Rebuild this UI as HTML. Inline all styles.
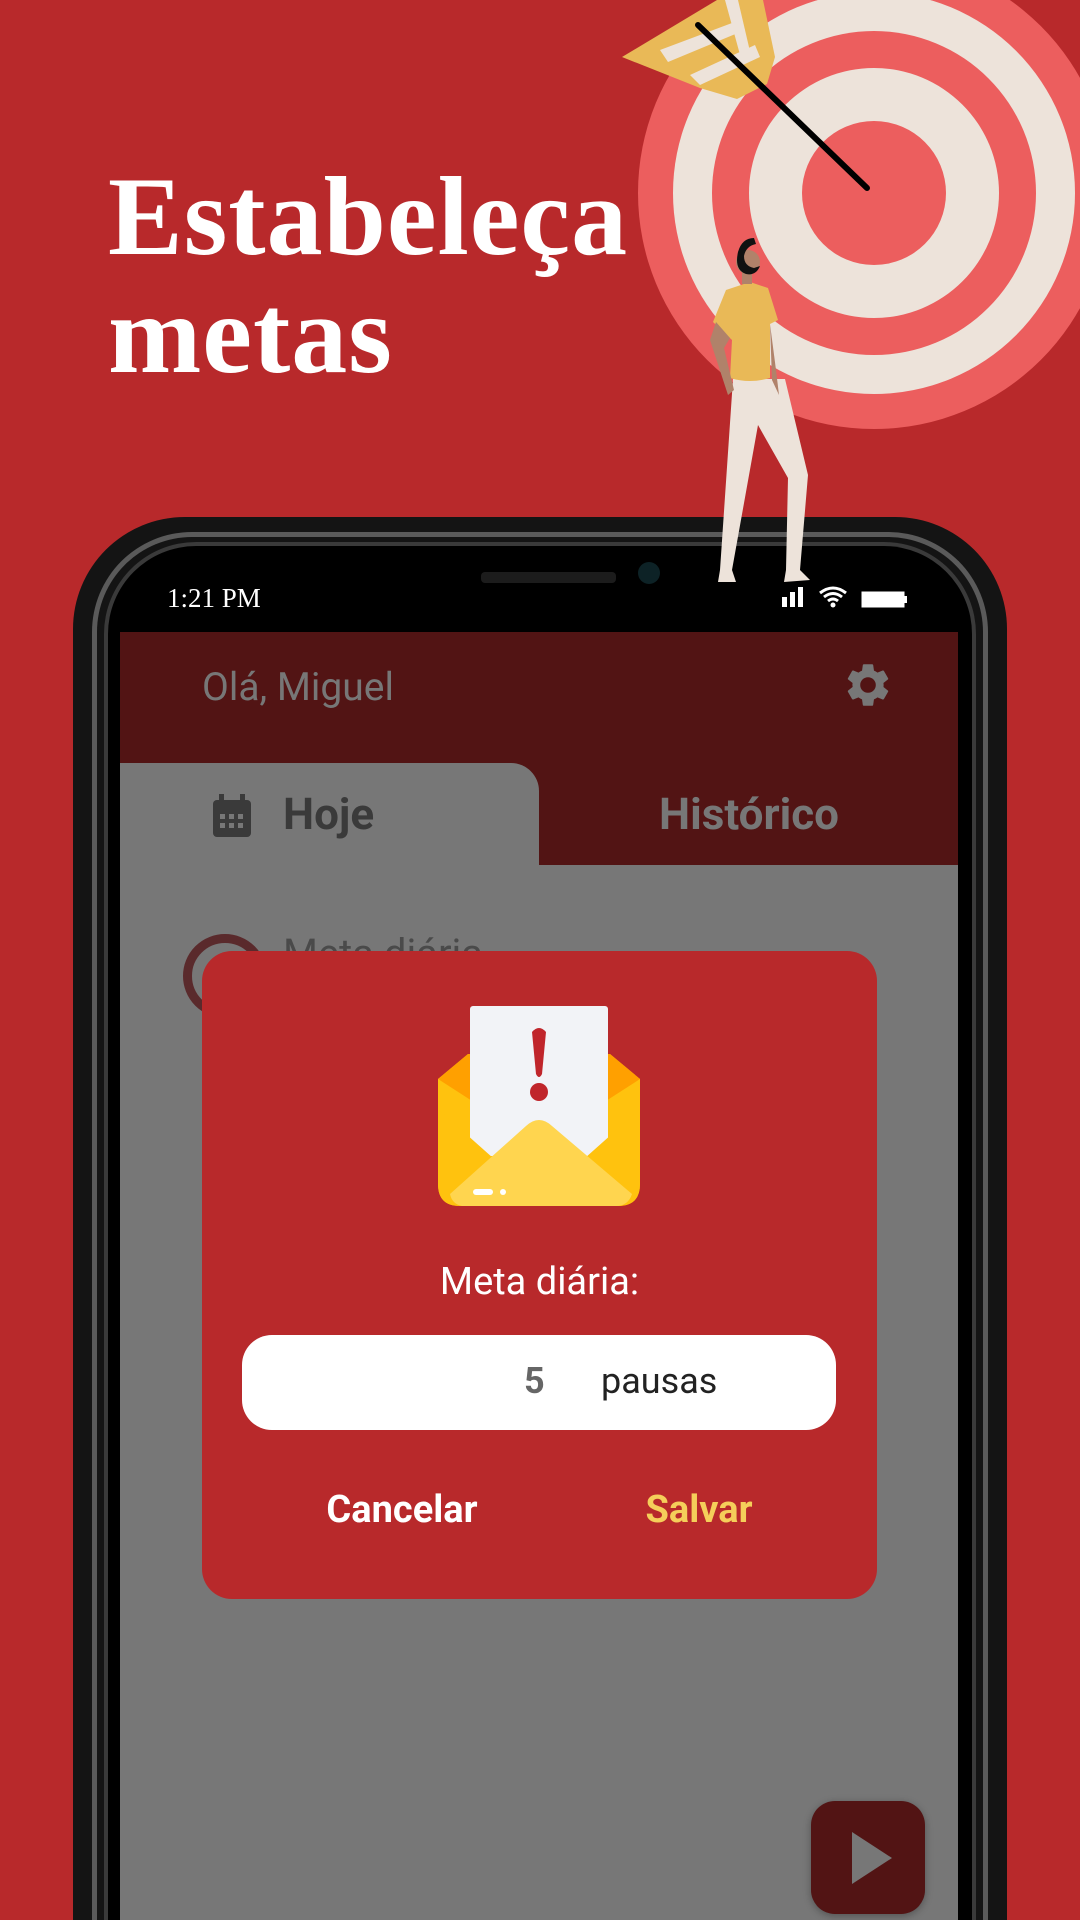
<!DOCTYPE html>
<html><head><meta charset="utf-8"><style>
*{margin:0;padding:0;box-sizing:border-box}
html{width:1080px;height:1920px;overflow:hidden}
body{width:1080px;height:1920px;overflow:hidden;background:#B8292B;position:relative;font-family:"Liberation Sans",sans-serif}
#wrap{position:absolute;left:0;top:0;width:1080px;height:1920px;overflow:hidden}
.abs{position:absolute}
.title{left:108px;top:158px;color:#fff;font-family:"Liberation Serif",serif;font-weight:bold;font-size:112px;line-height:118px;letter-spacing:1px}
.sans{font-family:"Roboto","Liberation Sans",sans-serif}
</style></head><body><div id="wrap">
<svg class="abs" style="left:0;top:0" width="1080" height="620">
<circle cx="874" cy="193" r="236" fill="#EC5E5E"/>
<circle cx="874" cy="193" r="201" fill="#EDE3DA"/>
<circle cx="874" cy="193" r="162" fill="#EC5E5E"/>
<circle cx="874" cy="193" r="125" fill="#EDE3DA"/>
<circle cx="874" cy="193" r="72" fill="#EC5E5E"/>
<polygon points="622,57 717,0 763,0 775,57 767,84 737,99 700,88" fill="#E9B957"/>
<polygon points="660,50 740,20 745,30 668,62" fill="#EDE3DA"/>
<polygon points="690,75 755,45 760,57 700,85" fill="#EDE3DA"/>
<polygon points="725,0 738,0 752,60 742,62" fill="#EDE3DA"/>
<line x1="698" y1="25" x2="867" y2="188" stroke="#000" stroke-width="6" stroke-linecap="round"/>
</svg>
<div class="abs title">Estabeleça<br>metas</div>

<!-- phone -->
<div class="abs" style="left:73px;top:517px;width:934px;height:1403px;background:#141414;border-radius:112px 112px 0 0"></div>
<div class="abs" style="left:92px;top:532px;width:896px;height:1388px;border:5px solid #5a5a5a;border-bottom:none;border-radius:100px 100px 0 0"></div>
<div class="abs" style="left:104px;top:542px;width:872px;height:1378px;background:#000;border-radius:92px 92px 0 0;border:4px solid #3a3a3a;border-bottom:none"></div>
<div class="abs" style="left:481px;top:572px;width:135px;height:11px;background:#1c1c1c;border-radius:4px"></div>
<div class="abs" style="left:638px;top:562px;width:22px;height:22px;background:#0d2226;border-radius:50%"></div>
<div class="abs" style="left:167px;top:583px;color:#fff;font-family:'Liberation Serif',serif;font-size:27px">1:21 PM</div>
<svg class="abs" style="left:780px;top:583px" width="130" height="30">
<rect x="2" y="14" width="5" height="10" fill="#fff"/><rect x="10" y="9" width="5" height="15" fill="#fff"/><rect x="18" y="4" width="5" height="20" fill="#fff"/>
<path d="M40 10 Q53 0 66 10 M44 14 Q53 7 62 14 M48 18 Q53 14 58 18" stroke="#fff" stroke-width="3" fill="none"/><circle cx="53" cy="22" r="2.5" fill="#fff"/>
<rect x="82" y="9" width="42" height="15" fill="#fff" stroke="#fff"/><rect x="124" y="13" width="3" height="7" fill="#fff"/>
</svg>

<!-- screen -->
<div class="abs" style="left:120px;top:632px;width:838px;height:1288px;background:#777"></div>
<div class="abs" style="left:120px;top:632px;width:838px;height:233px;background:#521414"></div>
<div class="abs" style="left:120px;top:763px;width:419px;height:110px;background:#777;border-radius:0 28px 0 0"></div>
<div class="abs sans" style="left:202px;top:664px;color:#777;font-size:39px">Olá, Miguel</div>
<svg class="abs" style="left:842px;top:659px" width="52" height="52" viewBox="0 0 24 24"><path fill="#777" d="M19.14 12.94c.04-.3.06-.61.06-.94 0-.32-.02-.64-.07-.94l2.03-1.58a.49.49 0 00.12-.61l-1.92-3.32a.49.49 0 00-.59-.22l-2.39.96c-.5-.38-1.03-.7-1.62-.94l-.36-2.54a.48.48 0 00-.48-.41h-3.84c-.24 0-.43.17-.47.41l-.36 2.54c-.59.24-1.130.57-1.62.94l-2.39-.96a.48.48 0 00-.59.22L2.74 8.87c-.12.21-.08.47.12.61l2.03 1.58c-.05.3-.09.63-.09.94s.2.64.07.94l-2.03 1.58a.49.49 0 00-.12.61l1.92 3.32c.12.22.37.29.59.22l2.39-.96c.5.38 1.03.7 1.62.94l.36 2.54c.05.24.24.41.48.41h3.84c.24 0 .44-.17.47-.41l.36-2.54c.59-.24 1.13-.56 1.62-.94l2.39.96c.22.08.47 0 .59-.22l1.92-3.32c.12-.22.07-.47-.12-.61l-2.01-1.58zM12 15.6A3.6 3.6 0 1112 8.4a3.6 3.6 0 010 7.2z"/></svg>
<svg class="abs" style="left:211px;top:794px" width="42" height="44" viewBox="0 0 42 44"><rect x="2" y="6" width="38" height="37" rx="4" fill="#3a3a3a"/><rect x="8" y="0" width="5" height="10" fill="#3a3a3a"/><rect x="29" y="0" width="5" height="10" fill="#3a3a3a"/><g fill="#777"><rect x="9" y="20" width="5" height="5"/><rect x="18" y="20" width="5" height="5"/><rect x="27" y="20" width="5" height="5"/><rect x="9" y="29" width="5" height="5"/><rect x="18" y="29" width="5" height="5"/><rect x="27" y="29" width="5" height="5"/></g></svg>
<div class="abs sans" style="left:283px;top:788px;color:#3a3a3a;font-size:44px;font-weight:bold">Hoje</div>
<div class="abs sans" style="left:540px;top:788px;width:418px;text-align:center;color:#777;font-size:44px;font-weight:bold">Histórico</div>
<div class="abs" style="left:183px;top:934px;width:84px;height:84px;border:9px solid #5a2a2c;border-radius:50%"></div>
<div class="abs sans" style="left:283px;top:930px;color:#4a4a4a;font-size:40px">Meta diária</div>

<!-- dialog -->
<div class="abs" style="left:202px;top:951px;width:675px;height:648px;background:#B8292B;border-radius:30px"></div>
<svg class="abs" style="left:438px;top:1004px" width="202" height="202" viewBox="0 0 202 202">
<path d="M0 75 L30 50 L172 50 L202 75 L202 180 Q202 202 180 202 L22 202 Q0 202 0 180Z" fill="#FFC20E"/>
<path d="M0 75 L30 50 L172 50 L202 75 L101 140Z" fill="#FFA000"/>
<rect x="32" y="2" width="138" height="150" rx="3" fill="#F2F3F7"/>
<path d="M94 28 Q101 20 108 28 L104 70 Q101 76 98 70Z" fill="#C0252B"/><circle cx="101" cy="88" r="9" fill="#C0252B"/>
<path d="M0 105 L101 195 L202 105 L202 180 Q202 202 180 202 L22 202 Q0 202 0 180Z" fill="#FFC20E"/>
<path d="M12 190 L88 122 Q101 110 114 122 L194 190 Q190 202 178 202 L24 202 Q14 200 12 190Z" fill="#FFD54F"/>
<rect x="35" y="185" width="20" height="6" rx="3" fill="#fff"/><circle cx="65" cy="188" r="3" fill="#fff"/>
</svg>
<div class="abs sans" style="left:202px;top:1260px;width:675px;text-align:center;color:#fff;font-size:38px">Meta diária:</div>
<div class="abs" style="left:242px;top:1335px;width:594px;height:95px;background:#fff;border-radius:30px"></div>
<div class="abs sans" style="left:524px;top:1360px;color:#666;font-size:36px;font-weight:bold">5</div>
<div class="abs sans" style="left:601px;top:1360px;color:#222;font-size:36px">pausas</div>
<div class="abs sans" style="left:302px;top:1488px;width:200px;text-align:center;color:#fff;font-size:38px;font-weight:bold">Cancelar</div>
<div class="abs sans" style="left:599px;top:1488px;width:200px;text-align:center;color:#F5CE5A;font-size:38px;font-weight:bold">Salvar</div>

<div class="abs" style="left:811px;top:1801px;width:114px;height:113px;background:#521414;border-radius:24px;box-shadow:0 2px 8px rgba(0,0,0,.3)"></div>
<svg class="abs" style="left:850px;top:1832px" width="44" height="52"><polygon points="2,0 42,26 2,52" fill="#777"/></svg>

<!-- person -->
<svg class="abs" style="left:680px;top:230px" width="160" height="370">
<path d="M53 149 L40 340 L52 340 L78 195 L108 248 L106 340 L120 340 L128 245 L105 149Z" fill="#EDE3DA"/>
<path d="M33 92 L46 60 L70 52 L88 58 L98 90 L90 94 L90 148 Q70 154 50 148 L52 110 Z" fill="#E9B957"/>
<path d="M36 92 L30 110 L48 165 L54 160 L44 118 L50 108Z" fill="#B0826A"/>
<path d="M90 94 L92 150 L99 165 L96 140Z" fill="#B0826A"/>
<circle cx="68" cy="32" r="12" fill="#B0826A"/><rect x="62" y="40" width="10" height="14" fill="#B0826A"/>
<path d="M58 22 Q62 8 74 8 L76 14 Q66 16 64 26 Q64 36 74 38 L80 36 Q76 46 66 44 Q54 40 58 22Z" fill="#111"/>
<path d="M40 340 L52 340 L56 352 L38 352Z M106 340 L120 340 L130 350 L104 352Z" fill="#EDE3DA"/>
</svg>
</div></body></html>
